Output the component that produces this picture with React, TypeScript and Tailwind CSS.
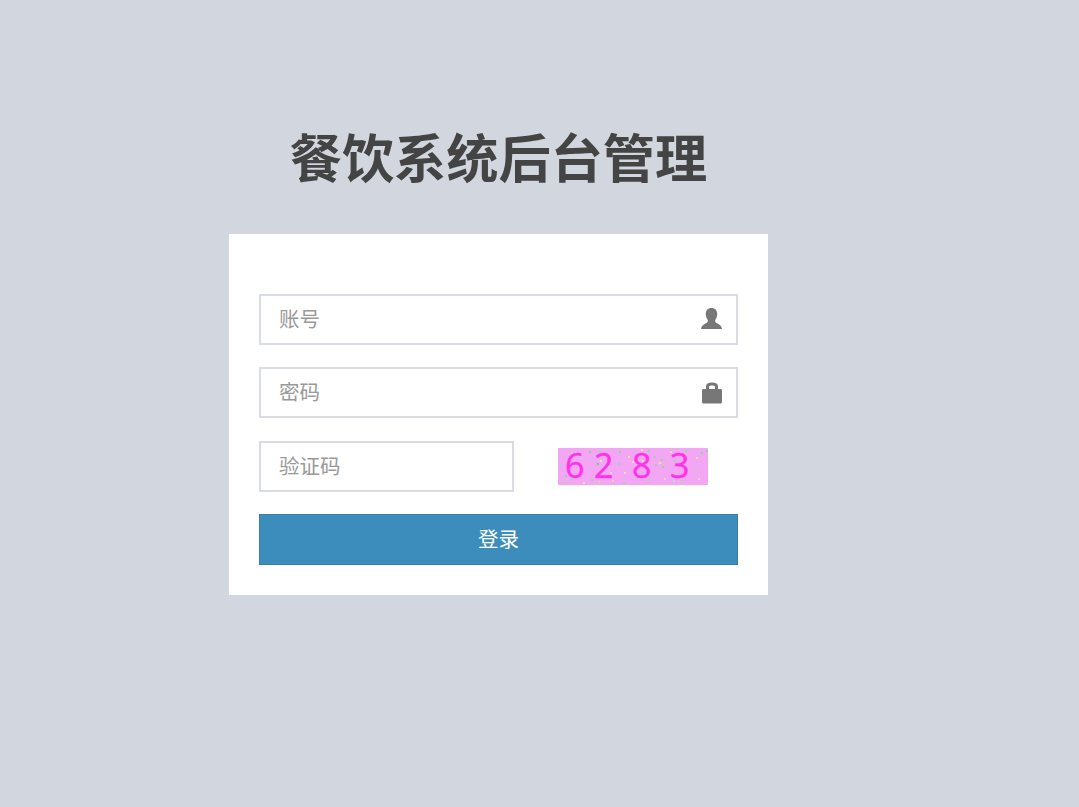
const cjk = "font-['Noto_Sans_CJK_SC','Noto_Sans',sans-serif]"

// captcha noise, roughly where the specks sit in the picture
const noise: [number, number, string][] = [
  [2, 16, '#a8cff0'], [7, 27, '#7fd8b0'], [5, 33, '#b8dc88'], [13, 4, '#f5d0b8'], [13, 30, '#90dcb0'],
  [20, 9, '#a8d0f0'], [25, 34, '#f5dca0'], [31, 3, '#70d890'], [33, 31, '#88dca0'], [40, 33, '#a8e4b0'],
  [42, 12, '#f5d8b8'], [45, 28, '#f5dcb0'], [41, 3, '#90dc98'], [39, 15, '#40e080'], [45, 17, '#a8d0f0'],
  [54, 32, '#f5d8a0'], [52, 24, '#f5d0c0'], [61, 3, '#88dc90'], [65, 35, '#98dc90'], [70, 8, '#f5e4a0'],
  [66, 24, '#f5dcb0'], [74, 13, '#f5d8d8'], [83, 1, '#f5e490'], [90, 2, '#88dcb0'], [90, 31, '#98e480'],
  [96, 8, '#88dca0'], [97, 16, '#88dc90'], [101, 14, '#f5dca0'], [103, 11, '#88dc90'], [104, 18, '#90d890'],
  [106, 30, '#f5d8b0'], [112, 3, '#f5dca0'], [115, 32, '#a8dcf0'], [123, 32, '#98e490'], [125, 7, '#f5dc90'],
  [127, 2, '#88dca0'], [135, 22, '#a8dcc0'], [138, 9, '#f5dcb0'], [143, 4, '#88dc90'], [148, 2, '#88dc90'],
  [140, 30, '#f5d0c8'], [116, 12, '#88dcb0'], [84, 12, '#f5d8b0'], [60, 15, '#88dcb0'], [78, 29, '#90dc90'],
]

function UserIcon() {
  return (
    <svg viewBox="0 0 21 21" className="mb-[2px] h-[21px] w-[21px] text-[#777]" fill="currentColor">
      <path d="M10.500 0C6.800 0 4.800 2.300 4.800 6c0 2.400 0.800 4.300 2 6 0.300 1.800-0.500 2.700-2.800 3.800C1.800 16.800 0.400 18.500 0 21h21c-0.400-2.500-1.800-4.200-4-5.200-2.300-1.100-3.100-2-2.800-3.800 1.200-1.700 2-3.600 2-6 0-3.700-2-6-5.700-6z" />
    </svg>
  )
}

function LockIcon() {
  return (
    <svg viewBox="0 0 20 22" className="h-[22px] w-[20px] text-[#777]" fill="currentColor">
      <path
        fillRule="evenodd"
        d="M4 7V4.500C4 1.800 6 0.500 10 0.500S16 1.800 16 4.500V7h2.500c0.900 0 1.500 0.600 1.500 1.500v11.500c0 0.900-0.600 1.500-1.500 1.500H1.500C0.600 21.500 0 20.900 0 20V8.500C0 7.600 0.600 7 1.500 7H4zM7 7h6V5c0-1-1-1.500-3-1.500S7 4 7 5v2z"
      />
    </svg>
  )
}

function Field({ placeholder, icon }: { placeholder: string; icon?: React.ReactNode }) {
  return (
    <div className="flex h-[51px] items-center justify-between border-2 border-[#d9dce3] bg-white pl-[18px] pr-[14px]">
      <span className="pb-[2px] text-[20.5px] text-[#999]">{placeholder}</span>
      {icon}
    </div>
  )
}

function Captcha() {
  return (
    <svg viewBox="0 0 150 37" className="h-[37px] w-[150px] overflow-visible">
      <rect width="150" height="37" fill="#f3a6f3" />
      {noise.map(([x, y, c], i) => (
        <rect key={i} x={x} y={y} width="2" height="2" fill={c} />
      ))}
      <g fill="#ff33e6" stroke="#ff33e6" strokeWidth="0.4" fontFamily="'Open Sans', sans-serif" fontSize="34">
        <text x="7" y="30">6</text>
        <text x="36" y="30">2</text>
        <text x="74" y="30">8</text>
        <text x="112" y="30">3</text>
      </g>
    </svg>
  )
}

export default function App() {
  return (
    <div className={`min-h-[807px] bg-[#d2d6de] ${cjk}`}>
      <div className="flex w-[997px] flex-col items-center pt-[117px]">
        <h1 className="mb-[40px] text-[52.2px] font-bold leading-[77px] text-[#444]">餐饮系统后台管理</h1>
        <div className="flex w-[539px] flex-col gap-[22.5px] bg-white px-[30px] pb-[30px] pt-[59.5px]">
          <Field placeholder="账号" icon={<UserIcon />} />
          <Field placeholder="密码" icon={<LockIcon />} />
          <div className="flex items-center">
            <div className="w-[255px]">
              <Field placeholder="验证码" />
            </div>
            <div className="ml-[44px] mt-[1px]">
              <Captcha />
            </div>
          </div>
          <button className="h-[51px] border border-[#367fa9] bg-[#3c8dbc] pb-[2px] text-[20.5px] text-white">登录</button>
        </div>
      </div>
    </div>
  )
}
